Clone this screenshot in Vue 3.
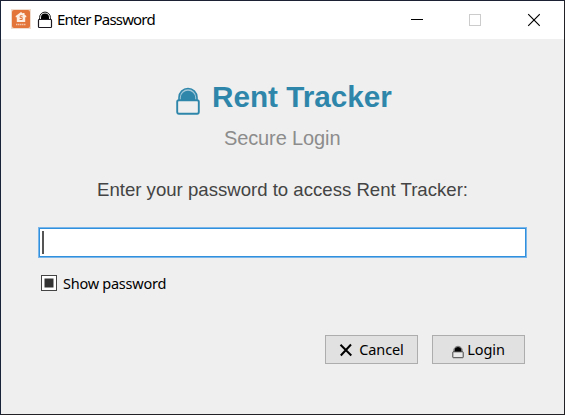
<script setup>
import { ref } from 'vue'

const password = ref('')
</script>

<template>
  <div class="window">
    <header class="titlebar">
      <svg class="app-icon" viewBox="0 0 20 20">
        <rect width="20" height="20" fill="#f0ddd0" />
        <rect x="1" y="1" width="18" height="18" rx="2" fill="#e3753a" />
        <path d="M10 3 4.700 7v1.300h1.100V13h8.400V8.300h1.100V7l-1.800-1.400V4h-1.500v.6z" fill="#fdeee4" />
        <path d="M11.600 6.800H9.200v1.800h2v1.900H8.600" fill="none" stroke="#e3753a" stroke-width="1" />
        <path d="M5 15.500h10" stroke="#f4c4a6" stroke-width="1.500" stroke-dasharray="1.500 .5" />
      </svg>
      <svg class="lock-title" viewBox="0 0 16 18">
        <path d="M2.600 9V6.500a5.400 5.400 0 0 1 10.800 0V9" fill="#fff" stroke="#111" stroke-width="1" />
        <path d="M4 8.500V6.500a4 4 0 0 1 8 0v2z" fill="#000" />
        <rect x="1.500" y="8.500" width="13" height="8" rx=".8" fill="#fff" stroke="#1c1820" stroke-width="1.200" />
      </svg>
      <span class="caption">Enter Password</span>
      <div class="controls">
        <svg viewBox="0 0 14 14"><path d="M1 6.500h12" stroke="#000" /></svg>
        <svg viewBox="0 0 14 14"><rect x="1.500" y="1.500" width="11" height="11" fill="none" stroke="#ccc" /></svg>
        <svg viewBox="0 0 14 14"><path d="M2.200 1.200 13.800 12.800M13.800 1.200 2.200 12.800" stroke="#000" stroke-width="1.150" /></svg>
      </div>
    </header>
    <main class="content">
      <h1 class="brand">
        <svg class="lock-brand" viewBox="0 0 24 28">
          <path d="M3 13.500V10.500a9 9 0 0 1 18 0v3" fill="#a5c9d9" stroke="#2e86ab" stroke-width="1.600" />
          <path d="M4.800 14V10.500a7.200 6.800 0 0 1 14.400 0V14z" fill="#2e86ab" />
          <rect x="1.200" y="13.200" width="21.600" height="13.500" rx="1.600" fill="#efefef" stroke="#2e86ab" stroke-width="1.900" />
        </svg>
        <span>Rent Tracker</span>
      </h1>
      <p class="subtitle">Secure Login</p>
      <p class="prompt">Enter your password to access Rent Tracker:</p>
      <div class="field">
        <span class="caret"></span>
        <input v-model="password" class="input" type="password" />
      </div>
      <div class="option">
        <span class="check"></span>
        <span class="option-label">Show password</span>
      </div>
      <div class="actions">
        <button class="btn">
          <svg class="cross" viewBox="0 0 14 14"><path d="M1.500 1.800 12.300 12.500M12 1.500 1.800 12.500" stroke="#000" stroke-width="2" /></svg>
          <span class="btn-label">Cancel</span>
        </button>
        <button class="btn">
          <svg class="lock-btn" viewBox="0 0 12 14">
            <path d="M1.800 7V5.500a4.200 4.200 0 0 1 8.400 0V7" fill="none" stroke="#555" stroke-width=".8" />
            <path d="M2.500 7V5.600a3.500 3.500 0 0 1 7 0V7z" fill="#000" />
            <rect x=".8" y="6.800" width="10.400" height="5.900" rx=".5" fill="#e9e9e9" stroke="#333" stroke-width=".9" />
          </svg>
          <span class="btn-label">Login</span>
        </button>
      </div>
    </main>
  </div>
</template>

<style>
body {
  margin: 0;
  overflow: hidden;
}
</style>

<style scoped>
.window {
  box-sizing: border-box;
  width: 565px;
  height: 415px;
  border: 1px solid #222126;
  border-left-color: #18233a;
  border-top-color: #1c2233;
  background: #efefef;
  font-family: "Noto Sans", "Open Sans", sans-serif;
  color: #000;
}
.titlebar {
  display: flex;
  align-items: center;
  box-sizing: border-box;
  height: 38px;
  padding: 0 24px 2px 10px;
  background: #fff;
}
.app-icon {
  width: 20px;
  height: 20px;
}
.lock-title {
  width: 16px;
  height: 18px;
  margin: 2px 0 0 6px;
}
.caption {
  margin-left: 4px;
  font-size: 15px;
  line-height: 20px;
  letter-spacing: -0.830px;
  white-space: nowrap;
}
.controls {
  display: flex;
  gap: 44px;
  margin: 2px 0 0 auto;
}
.controls svg {
  width: 14px;
  height: 14px;
}
.content {
  display: flex;
  flex-direction: column;
  padding: 0 38px 0 37px;
}
.brand {
  display: flex;
  align-items: flex-start;
  gap: 12px;
  margin: 41px 0 0 138px;
  font: bold 29.700px/34px "Liberation Sans", Arial, sans-serif;
  color: #2e86ab;
}
.lock-brand {
  width: 24px;
  height: 28px;
  margin-top: 7px;
}
.subtitle {
  margin: 11px 0 0 186px;
  font: 20px/24px "Liberation Sans", Arial, sans-serif;
  letter-spacing: -0.120px;
  color: #8c8c8c;
}
.prompt {
  margin: 29px 0 0 59px;
  font: 18.600px/22px "Liberation Sans", Arial, sans-serif;
  color: #444;
  white-space: nowrap;
}
.field {
  display: flex;
  align-items: center;
  box-sizing: border-box;
  width: 489px;
  height: 31px;
  margin-top: 26px;
  padding: 0 3px;
  border: 1px solid #7ab6ea;
  background: #fff;
  box-shadow: inset 0 0 0 1px #3090dd;
}
.caret {
  width: 2px;
  height: 23px;
  background: #555;
}
.input {
  flex: 1;
  min-width: 0;
  padding: 0;
  border: 0;
  outline: none;
  background: transparent;
  font-size: 17px;
}
.option {
  display: flex;
  align-items: center;
  height: 22px;
  margin: 14px 0 0 3px;
}
.check {
  box-sizing: border-box;
  width: 16px;
  height: 16px;
  border: 1px solid #444;
  background: #333;
  box-shadow: inset 0 0 0 2.500px #fff;
}
.option-label {
  margin-left: 6px;
  font-size: 14.500px;
  line-height: 20px;
  letter-spacing: -0.250px;
}
.actions {
  display: flex;
  justify-content: flex-end;
  gap: 14px;
  margin: 41px 1px 0 0;
}
.btn {
  display: flex;
  align-items: center;
  justify-content: center;
  box-sizing: border-box;
  width: 93px;
  height: 29px;
  padding: 0;
  border: 1px solid #adadad;
  background: #e1e1e1;
  color: #000;
  font: 14.500px/20px "Noto Sans", "Open Sans", sans-serif;
}
.cross {
  width: 14px;
  height: 14px;
  margin-right: 6px;
}
.lock-btn {
  width: 12px;
  height: 14px;
  margin: 4px 3px 0 0;
}
.btn-label {
  padding-bottom: 2px;
  letter-spacing: -0.100px;
}
</style>
